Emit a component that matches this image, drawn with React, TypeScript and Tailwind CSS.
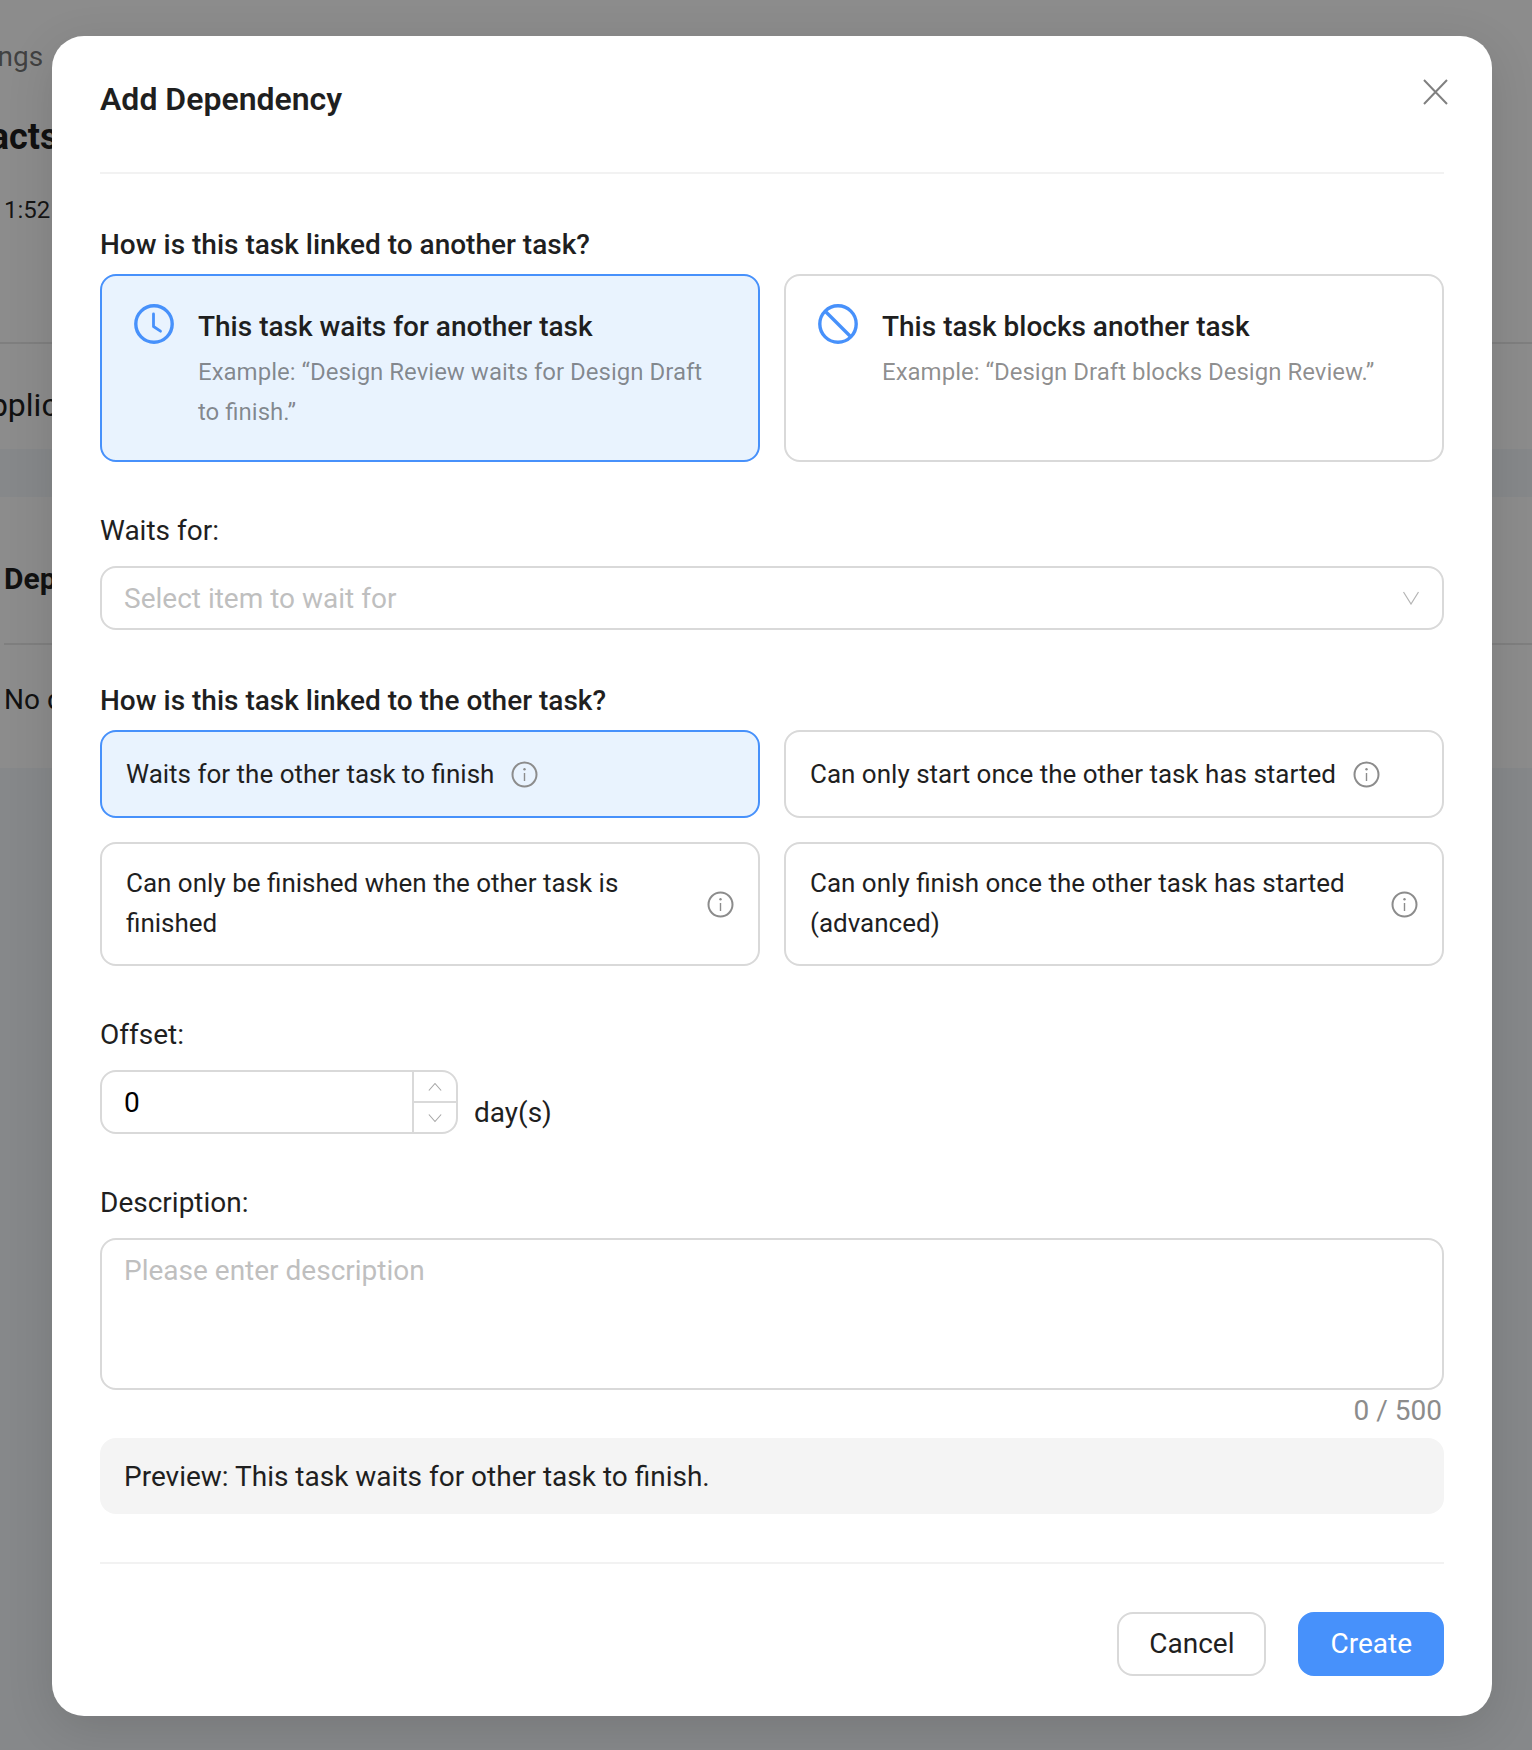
import React from "react";

function InfoIcon() {
  return (
    <svg width="27" height="27" viewBox="0 0 27 27" fill="none" className="shrink-0 text-[#8c8c8c]">
      <circle cx="13.5" cy="13.5" r="12" stroke="currentColor" strokeWidth="2" />
      <circle cx="13.5" cy="8.2" r="1.2" fill="currentColor" />
      <path d="M13.5 12v8" stroke="currentColor" strokeWidth="1.4" />
    </svg>
  );
}

function ClockIcon() {
  return (
    <svg width="40" height="40" viewBox="0 0 40 40" fill="none" className="shrink-0 text-[#4791fb]">
      <circle cx="20" cy="20" r="18.2" stroke="currentColor" strokeWidth="3.4" />
      <path d="M19.5 10v12.5l7 4.7" stroke="currentColor" strokeWidth="2.8" strokeLinecap="round" strokeLinejoin="round" />
    </svg>
  );
}

function BanIcon() {
  return (
    <svg width="40" height="40" viewBox="0 0 40 40" fill="none" className="shrink-0 text-[#4791fb]">
      <circle cx="20" cy="20" r="18.2" stroke="currentColor" strokeWidth="3.4" />
      <path d="M7 7l26 26" stroke="currentColor" strokeWidth="3.4" />
    </svg>
  );
}

function StepChevron({ up }: { up?: boolean }) {
  return (
    <svg width="14" height="14" viewBox="0 0 16 16" fill="none">
      <path d={up ? "M1 12L8 4l7 8" : "M1 4l7 8 7-8"} stroke="currentColor" strokeWidth="1.3" />
    </svg>
  );
}

function TypeCard({ active, icon, title, desc }: { active?: boolean; icon: React.ReactNode; title: string; desc: string }) {
  return (
    <div
      className={`flex h-[188px] gap-[24px] rounded-[16px] border-2 px-[32px] pt-[28px] ${
        active ? "border-[#4791fb] bg-[#e9f3fe]" : "border-[#d9d9d9] bg-white"
      }`}
    >
      {icon}
      <div className="min-w-0 pt-[3px]">
        <div className="text-[28px] font-medium leading-[40px] text-[#1f1f1f]">{title}</div>
        <div className="mt-[5px] text-[24px] leading-[40px] text-black/45">{desc}</div>
      </div>
    </div>
  );
}

function LinkCard({ active, text, tall }: { active?: boolean; text: string; tall?: boolean }) {
  return (
    <div
      className={`flex items-center gap-[17px] rounded-[16px] border-2 px-[24px] ${tall ? "h-[124px]" : "h-[88px]"} ${
        active ? "border-[#4791fb] bg-[#e9f3fe]" : "border-[#d9d9d9] bg-white"
      }`}
    >
      <span className={`text-[26px] leading-[40px] text-[#1f1f1f] ${tall ? "pb-[2px]" : ""}`}>{text}</span>
      <InfoIcon />
    </div>
  );
}

function Background() {
  return (
    <div className="h-[1750px] overflow-hidden bg-white whitespace-nowrap text-[#1f1f1f]">
      <div className="ml-[-59px] pt-[37px] text-[28px] leading-[40px] text-black/55">Settings</div>
      <div className="ml-[-83px] mt-[35px] text-[36px] font-bold leading-[50px]">Artifacts</div>
      <div className="ml-[4px] mt-[28px] text-[24px] leading-[40px] text-black/85">1:52 PM</div>
      <div className="mt-[112px] h-[2px] bg-[#e8e8e8]" />
      <div className="ml-[-31px] mt-[39px] text-[32px] leading-[44px]">Application</div>
      <div className="mt-[22px] h-[48px] bg-[#f5f7fb]" />
      <div className="ml-[4px] mt-[60px] text-[30px] font-bold leading-[44px]">Dependencies</div>
      <div className="ml-[4px] mt-[42px] h-[2px] bg-[#e8e8e8]" />
      <div className="ml-[4px] mt-[35px] text-[28px] leading-[40px]">No dependencies</div>
      <div className="mt-[48px] h-[982px] bg-[#f5f7fb]" />
    </div>
  );
}

export default function App() {
  return (
    <div className="relative h-[1750px] w-full overflow-hidden font-['Roboto',sans-serif]">
      <Background />
      <div className="absolute inset-0 flex justify-start bg-black/45 pl-[52px] pt-[36px]">
        <div className="relative h-[1680px] w-[1440px] rounded-[32px] bg-white px-[48px] pb-[40px] pt-[40px] shadow-[0_12px_48px_rgba(0,0,0,0.12)]">
          <button className="absolute right-[44px] top-[43px] text-[#808080]" aria-label="Close">
            <svg width="25" height="26" viewBox="0 0 25 26" fill="none">
              <path d="M1 1l23 24M24 1L1 25" stroke="currentColor" strokeWidth="2" />
            </svg>
          </button>

          <div className="border-b-2 border-[#f2f2f2] pb-[50px]">
            <h2 className="text-[32px] font-semibold leading-[46px] text-[#1f1f1f]">Add Dependency</h2>
          </div>

          <div className="mb-[9px] mt-[51px] text-[28px] font-medium leading-[40px] text-[#1f1f1f]">
            How is this task linked to another task?
          </div>
          <div className="grid grid-cols-2 gap-[24px]">
            <TypeCard
              active
              icon={<ClockIcon />}
              title="This task waits for another task"
              desc="Example: “Design Review waits for Design Draft to finish.”"
            />
            <TypeCard
              icon={<BanIcon />}
              title="This task blocks another task"
              desc="Example: “Design Draft blocks Design Review.”"
            />
          </div>

          <div className="mb-[15px] mt-[49px] text-[28px] leading-[40px] text-[#1f1f1f]">Waits for:</div>
          <div className="flex h-[64px] items-center justify-between rounded-[16px] border-2 border-[#d9d9d9] pl-[22px] pr-[23px]">
            <span className="pt-[2px] text-[28px] text-[#bfbfbf]">Select item to wait for</span>
            <svg width="16" height="14" viewBox="0 0 16 14" fill="none" className="text-[#b4b4b4]">
              <path d="M0.5 1L8 13l7.5-12" stroke="currentColor" strokeWidth="1.2" />
            </svg>
          </div>

          <div className="mb-[9px] mt-[51px] text-[28px] font-medium leading-[40px] text-[#1f1f1f]">
            How is this task linked to the other task?
          </div>
          <div className="grid grid-cols-2 gap-[24px]">
            <LinkCard active text="Waits for the other task to finish" />
            <LinkCard text="Can only start once the other task has started" />
            <LinkCard tall text="Can only be finished when the other task is finished" />
            <LinkCard tall text="Can only finish once the other task has started (advanced)" />
          </div>

          <div className="mb-[15px] mt-[49px] text-[28px] leading-[40px] text-[#1f1f1f]">Offset:</div>
          <div className="flex items-end gap-[16px]">
            <div className="flex h-[64px] w-[358px] overflow-hidden rounded-[16px] border-2 border-[#d9d9d9]">
              <input
                readOnly
                value="0"
                className="min-w-0 flex-1 bg-transparent pl-[22px] pt-[2px] text-[28px] text-black outline-none"
              />
              <div className="flex w-[44px] flex-col border-l-2 border-[#d9d9d9] text-[#a6a6a6]">
                <div className="flex flex-1 items-center justify-center border-b-2 border-[#d9d9d9]">
                  <StepChevron up />
                </div>
                <div className="flex flex-1 items-center justify-center">
                  <StepChevron />
                </div>
              </div>
            </div>
            <span className="translate-y-[1px] text-[28px] leading-[44px] text-[#1f1f1f]">day(s)</span>
          </div>

          <div className="mb-[15px] mt-[49px] text-[28px] leading-[40px] text-[#1f1f1f]">Description:</div>
          <textarea
            readOnly
            placeholder="Please enter description"
            className="block h-[152px] w-full resize-none rounded-[16px] border-2 border-[#d9d9d9] px-[22px] py-[11px] text-[28px] leading-[40px] outline-none placeholder:text-[#bfbfbf]"
          />
          <div className="pr-[2px] pt-[1px] text-right text-[28px] leading-[39px] text-[#8c8c8c]">0 / 500</div>

          <div className="mt-[8px] flex h-[76px] items-center rounded-[16px] bg-[#f4f4f4] px-[24px] pt-[2px] text-[28px] text-[#1f1f1f]">
            Preview: This task waits for other task to finish.
          </div>

          <div className="mt-[48px] border-t-2 border-[#f2f2f2] pt-[48px]">
            <div className="flex justify-end gap-[32px]">
              <button className="h-[64px] rounded-[16px] border-2 border-[#d9d9d9] bg-white px-[30px] text-[28px] text-[#1f1f1f]">
                Cancel
              </button>
              <button className="h-[64px] rounded-[16px] border-2 border-[#4791fb] bg-[#4791fb] px-[30px] text-[28px] text-white">
                Create
              </button>
            </div>
          </div>
        </div>
      </div>
    </div>
  );
}
